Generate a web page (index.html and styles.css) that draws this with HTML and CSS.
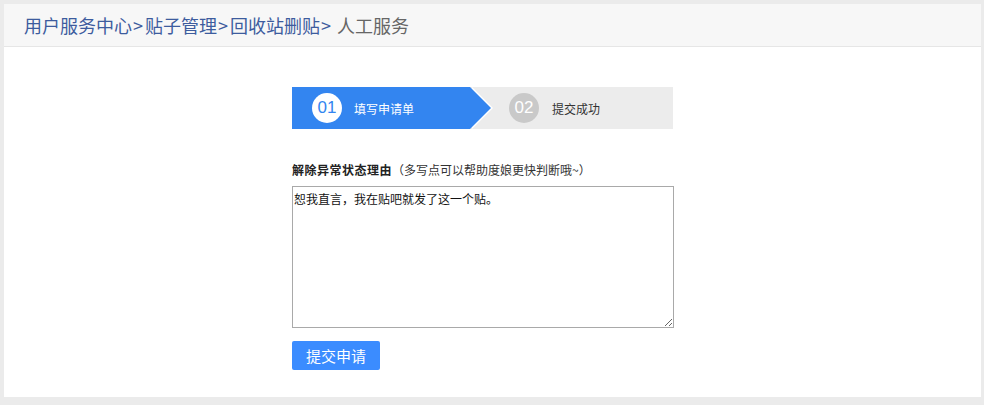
FILE: index.html
```html
<!DOCTYPE html>
<html lang="zh-CN">
<head>
<meta charset="utf-8">
<title>人工服务</title>
<link rel="stylesheet" href="styles.css">
</head>
<body>
<div class="panel">
  <div class="crumbs">
    <a class="crumb">用户服务中心</a><span class="sep">&gt;</span><a class="crumb">贴子管理</a><span class="sep">&gt;</span><a class="crumb">回收站删贴</a><span class="sep sep-last">&gt;</span><span class="current">人工服务</span>
  </div>
  <div class="content">
    <div class="steps">
      <div class="step step-active"><span class="num">01</span><span class="step-text">填写申请单</span></div>
      <div class="step step-next"><span class="num">02</span><span class="step-text">提交成功</span></div>
    </div>
    <div class="label"><b>解除异常状态理由</b>（多写点可以帮助度娘更快判断哦~）</div>
    <textarea class="reason">恕我直言，我在贴吧就发了这一个贴。</textarea>
    <button class="submit">提交申请</button>
  </div>
</div>
</body>
</html>
```
FILE: styles.css
```css
html, body {
  margin: 0;
  padding: 0;
}
body {
  background: #ebebeb;
  font-family: "Noto Sans CJK SC", "Noto Sans", sans-serif;
  padding: 4px 3px 8px 4px;
}
.panel {
  background: #fff;
  height: 393px;
  box-sizing: border-box;
}
.crumbs {
  height: 43px;
  background: #f7f7f7;
  border-bottom: 1px solid #e6e6e6;
  box-sizing: border-box;
  display: flex;
  align-items: center;
  padding-left: 20px;
  font-size: 18px;
  color: #3d5c9e;
  line-height: 1;
}
.crumb {
  color: #3d5c9e;
}
.sep {
  padding: 0 2px 0 1px;
}
.sep-last {
  padding-right: 6px;
}
.current {
  color: #666;
}
.content {
  padding: 40px 0 0 288px;
}
.steps {
  display: flex;
  width: 381px;
  height: 42px;
  background: #ececec;
}
.step {
  display: flex;
  align-items: center;
  font-size: 12px;
}
.num {
  width: 30px;
  height: 30px;
  border-radius: 50%;
  display: flex;
  align-items: center;
  justify-content: center;
  font-family: "Liberation Sans", Arial, sans-serif;
  font-size: 17px;
}
.step-active {
  position: relative;
  width: 158px;
  padding-left: 20px;
  background: #3385f0;
  color: #fff;
}
.step-active .num {
  background: #fff;
  color: #3385f0;
}
.step-active .step-text {
  margin-left: 12px;
}
.step-active::before,
.step-active::after {
  content: "";
  position: absolute;
  top: 0;
  width: 0;
  height: 0;
  border-top: 21px solid transparent;
  border-bottom: 21px solid transparent;
}
.step-active::before {
  left: 100%;
  margin-left: 2px;
  border-left: 21px solid #fff;
}
.step-active::after {
  left: 100%;
  border-left: 21px solid #3385f0;
}
.step-next {
  padding-left: 39px;
  color: #333;
}
.step-next .num {
  background: #c9c9c9;
  color: #fff;
}
.step-next .step-text {
  margin-left: 13px;
}
.label {
  margin-top: 31px;
  font-size: 12px;
  line-height: 20px;
  color: #333;
}
.label b {
  color: #222;
  letter-spacing: 0.5px;
}
.reason {
  display: block;
  margin-top: 6px;
  width: 382px;
  height: 142px;
  box-sizing: border-box;
  border: 1px solid #a9a9a9;
  padding: 3px 1px;
  font-family: "Noto Sans CJK SC", sans-serif;
  font-size: 12px;
  line-height: 18px;
  color: #111;
  resize: both;
}
.submit {
  display: block;
  margin-top: 13px;
  width: 88px;
  height: 29px;
  border: none;
  border-radius: 2px;
  background: #3b8cff;
  color: #fff;
  font-family: "Noto Sans CJK SC", sans-serif;
  font-size: 15px;
  padding: 0;
}
```
